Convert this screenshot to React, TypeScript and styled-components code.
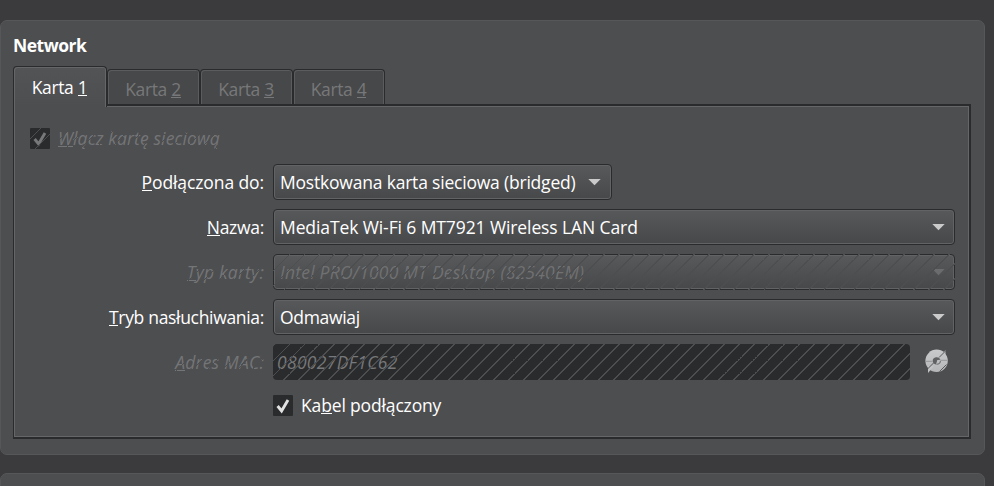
import React from 'react';
import styled, { createGlobalStyle, css } from 'styled-components';

const FACE = '#4d4e50';
const DARK = '#2a2b2d';
const LIGHT = '#656668';

const GlobalStyle = createGlobalStyle`
  * { box-sizing: border-box; }
  html, body { margin: 0; height: 100%; overflow: hidden; background: #3b3b3d; }
  body {
    font-family: 'Open Sans', 'Noto Sans', sans-serif;
    font-size: 17.5px;
    line-height: 24px;
    color: #fff;
  }
  u { text-decoration: none; box-shadow: 0 -1px 0 currentColor inset; display: inline-block; height: 21px; line-height: 24px; }
`;

const Page = styled.div`
  height: 486px;
  padding: 20px 9px 0 0;
  display: flex;
  flex-direction: column;
  gap: 18px;
  overflow: hidden;
`;

const Section = styled.section`
  flex: none;
  height: 435px;
  padding: 12px 13px 0 12px;
  background: ${FACE};
  border: 1px solid #565759;
  border-radius: 7px;
`;

const Title = styled.h1`
  margin: 0;
  font-size: 17.5px;
  line-height: 24px;
  font-weight: 700;
`;

/* Fine-tunes the advance of a caption so it fits its slot. */
const Text = styled.span<{ $spacing?: number }>`
  white-space: pre;
  letter-spacing: ${(p) => p.$spacing ?? 0}px;
`;

const Tabs = styled.div`
  display: flex;
  align-items: flex-end;
  height: 38px;
  margin-top: 9px;
`;

const Tab = styled.div<{ $active?: boolean }>`
  width: 93px;
  height: 35px;
  display: flex;
  justify-content: center;
  padding: 7px 1px 0 0;
  color: #77787a;
  background: #474849;
  border: 1px solid ${DARK};
  border-bottom: 0;
  border-radius: 4px 4px 0 0;
  box-shadow: inset 1px 1px 0 #5b5c5e, inset -1px 0 0 #5b5c5e;
  &:last-child {
    width: 92px;
  }
  ${(p) =>
    p.$active &&
    css`
      position: relative;
      z-index: 1;
      width: 94px;
      height: 41px;
      margin-bottom: -3px;
      padding-top: 8px;
      color: #fff;
      background: linear-gradient(#535456, ${FACE});
      box-shadow: inset 1px 1px 0 ${LIGHT}, inset -1px 0 0 ${LIGHT};
    `}
`;

const Panel = styled.div`
  height: 335px;
  border: 2px solid ${DARK};
  border-left-width: 1px;
  box-shadow: inset 0 0 0 1px ${LIGHT};
  padding: 20px 14px 0 16px;
`;

const hatch = css<{ $hatch?: number }>`
  ${(p) =>
    p.$hatch !== undefined &&
    css`
      position: relative;
      &::after {
        content: '';
        position: absolute;
        inset: 0;
        background: repeating-linear-gradient(
          135deg,
          transparent 0 ${p.$hatch * 0.70711}px,
          ${FACE} ${p.$hatch * 0.70711}px ${(p.$hatch + 1.2) * 0.70711}px,
          transparent ${(p.$hatch + 1.2) * 0.70711}px 10.6066px
        );
      }
    `}
`;

const CheckLine = styled.label<{ $muted?: boolean; $hatch?: number }>`
  display: flex;
  align-items: center;
  gap: 8px;
  width: max-content;
  height: 24px;
  color: ${(p) => (p.$muted ? '#747577' : '#fff')};
  font-style: ${(p) => (p.$muted ? 'italic' : 'normal')};
  ${hatch}
`;

const Box = styled.span`
  width: 20px;
  height: 21px;
  display: flex;
  background: ${DARK};
  border-radius: 1px;
`;

const Form = styled.div`
  display: grid;
  grid-template-columns: 234px 682px;
  column-gap: 9px;
  row-gap: 9px;
  margin-top: 14px;
`;

const Label = styled.div<{ $muted?: boolean; $hatch?: number }>`
  height: 24px;
  margin-top: 6px;
  justify-self: end;
  color: ${(p) => (p.$muted ? '#747577' : '#fff')};
  font-style: ${(p) => (p.$muted ? 'italic' : 'normal')};
  ${hatch}
`;

const Combo = styled.div<{ $short?: boolean; $muted?: boolean; $hatch?: number }>`
  width: ${(p) => (p.$short ? 339 : 682)}px;
  height: 36px;
  display: flex;
  justify-content: space-between;
  padding: 5px ${(p) => (p.$short ? 10 : 9)}px 0 6px;
  border: 1px solid ${DARK};
  border-radius: 4px;
  background: linear-gradient(#58595b, #474849);
  box-shadow: inset 0 0 0 1px #626365;
  color: ${(p) => (p.$muted ? '#707173' : '#fff')};
  font-style: ${(p) => (p.$muted ? 'italic' : 'normal')};
  ${hatch}
  &::after { inset: -1px; }
`;

const MacLine = styled.div`
  display: flex;
  align-items: center;
  gap: 14px;
`;

const Field = styled.div<{ $hatch?: number }>`
  width: 637px;
  height: 36px;
  padding: 6px 4px;
  border-radius: 4px;
  background: ${DARK};
  color: #77787a;
  font-style: italic;
  ${hatch}
`;

const CableRow = styled.div`
  grid-column: 2;
  padding-top: 4px;
`;

const ArrowSvg = styled.svg`
  margin-top: 8px;
`;

const Arrow = ({ muted }: { muted?: boolean }) => (
  <ArrowSvg width="13" height="8" viewBox="0 0 13 8">
    <path d="M.3 1h12.4L6.5 7.3z" fill={muted ? '#6b6c6e' : '#cacaca'} />
  </ArrowSvg>
);

const Tick = ({ muted }: { muted?: boolean }) => (
  <svg width="20" height="21" viewBox="0 0 20 21">
    <path
      d="M4.6 11 8.6 16 15 5"
      fill="none"
      stroke={muted ? '#77787a' : '#e2e2e2'}
      strokeWidth="2.9"
    />
  </svg>
);

const Refresh = () => (
  <svg width="26" height="26" viewBox="0 0 26 26">
    <defs>
      <linearGradient id="disc" x1="0" y1="0" x2="0" y2="1">
        <stop offset="0" stopColor="#c9cacb" />
        <stop offset="1" stopColor="#b5b6b7" />
      </linearGradient>
    </defs>
    <circle cx="12.6" cy="11.8" r="11.2" fill="url(#disc)" />
    <path d="M21.500 1v7h-6zM4 24v-7h6z" fill="#c2c3c4" />
    <path d="M8.700 12a4 3.700 0 0 1 7.800-1.200l-3.200.2-1.300 4.400a3.800 3.500 0 0 1-3.300-3.400z" fill="#606163" />
    <path d="M12.500 15.300a4 3.700 0 0 0 4-3.500" fill="none" stroke="#77787a" strokeWidth="1.200" />
    <path d="M1.500 12.300h7M16.500 11.300h7" stroke="#959697" strokeWidth="1" />
    <path d="M3 20.500l6.500-6.500M15 8.500l7-7M15.500 22.500l7-7" stroke="#4d4e50" strokeWidth=".9" />
  </svg>
);

export default function App() {
  return (
    <>
      <GlobalStyle />
      <Page>
        <Section>
          <Title><Text $spacing={-0.5}>Network</Text></Title>
          <Tabs>
            <Tab $active><Text $spacing={-0.35}>Karta <u>1</u></Text></Tab>
            <Tab><Text $spacing={-0.35}>Karta <u>2</u></Text></Tab>
            <Tab><Text $spacing={-0.35}>Karta <u>3</u></Text></Tab>
            <Tab><Text $spacing={-0.35}>Karta <u>4</u></Text></Tab>
          </Tabs>
          <Panel>
            <CheckLine $muted $hatch={12}>
              <Box><Tick muted /></Box>
              <Text $spacing={0.13}><u>W</u>łącz kartę sieciową</Text>
            </CheckLine>
            <Form>
              <Label><Text $spacing={-0.1}><u>P</u>odłączona do:</Text></Label>
              <Combo $short><Text $spacing={-0.2}>Mostkowana karta sieciowa (bridged)</Text><Arrow /></Combo>
              <Label><Text $spacing={-0.3}><u>N</u>azwa:</Text></Label>
              <Combo><Text $spacing={-0.1}>MediaTek Wi-Fi 6 MT7921 Wireless LAN Card</Text><Arrow /></Combo>
              <Label $muted $hatch={6}><Text $spacing={0.22}><u>T</u>yp karty:</Text></Label>
              <Combo $muted $hatch={1}><Text $spacing={0.22}>Intel PRO/1000 MT Desktop (82540EM)</Text><Arrow muted /></Combo>
              <Label><Text $spacing={-0.32}><u>T</u>ryb nasłuchiwania:</Text></Label>
              <Combo><Text $spacing={-0.32}>Odmawiaj</Text><Arrow /></Combo>
              <Label $muted $hatch={6}><Text $spacing={0.2}><u>A</u>dres MAC:</Text></Label>
              <MacLine>
                <Field $hatch={1}><Text $spacing={0.3}>080027DF1C62</Text></Field>
                <Refresh />
              </MacLine>
              <CableRow>
                <CheckLine>
                  <Box><Tick /></Box>
                  <Text $spacing={-0.15}>Ka<u>b</u>el podłączony</Text>
                </CheckLine>
              </CableRow>
            </Form>
          </Panel>
        </Section>
        <Section />
      </Page>
    </>
  );
}
